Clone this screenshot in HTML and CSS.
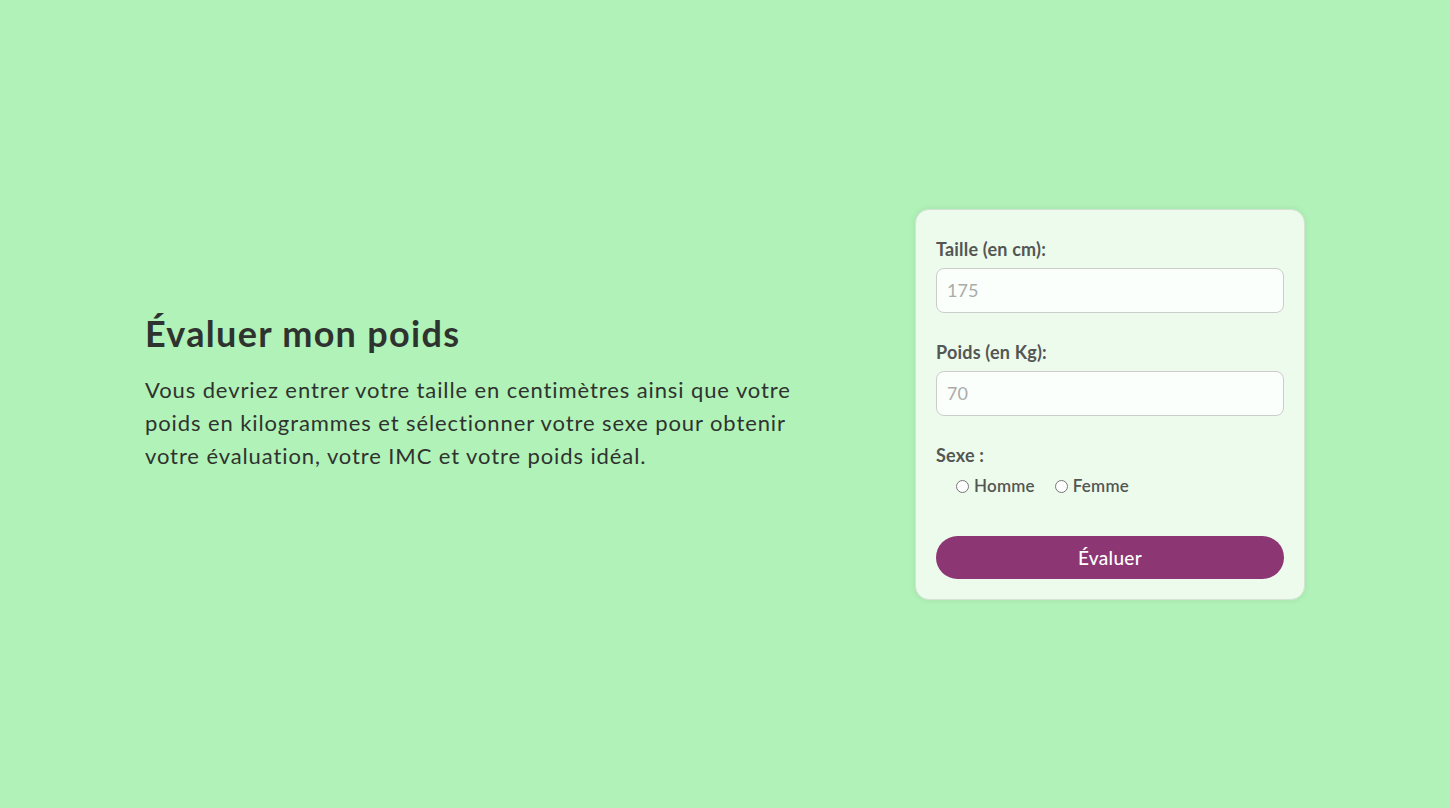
FILE: index.html
```html
<!DOCTYPE html>
<html lang="fr">
<head>
<meta charset="utf-8">
<title>Évaluer mon poids</title>
<link rel="stylesheet" href="styles.css">
</head>
<body>
<main class="page">
  <section class="intro">
    <h1 class="title">Évaluer mon poids</h1>
    <p class="lead">Vous devriez entrer votre taille en centimètres ainsi que votre poids en kilogrammes et sélectionner votre sexe pour obtenir votre évaluation, votre IMC et votre poids idéal.</p>
  </section>
  <form class="card">
    <div class="field">
      <label class="label" for="taille">Taille (en cm):</label>
      <input class="input" id="taille" type="text" placeholder="175">
    </div>
    <div class="field">
      <label class="label" for="poids">Poids (en Kg):</label>
      <input class="input" id="poids" type="text" placeholder="70">
    </div>
    <div class="field field-sex">
      <span class="label">Sexe :</span>
      <div class="radios">
        <label class="radio"><input type="radio" name="sexe"><span>Homme</span></label>
        <label class="radio"><input type="radio" name="sexe"><span>Femme</span></label>
      </div>
    </div>
    <button class="btn" type="button">Évaluer</button>
  </form>
</main>
</body>
</html>
```

FILE: styles.css
```css
* { box-sizing: border-box; }
html, body { margin: 0; height: 100%; }
body {
  background: #b1f2b8;
  font-family: "Lato", "Open Sans", sans-serif;
  color: #333633;
}
.page {
  height: 808px;
  padding: 0 145px;
  display: flex;
  align-items: center;
  justify-content: space-between;
}
.intro {
  width: 665px;
  margin-top: -22px;
}
.title {
  margin: 0 0 22px;
  font-size: 36px;
  font-weight: 700;
  letter-spacing: 1.3px;
  line-height: 36px;
  color: #2f332f;
}
.lead {
  margin: 0;
  font-size: 22px;
  letter-spacing: 0.9px;
  line-height: 33px;
  color: #2f332f;
}
.card {
  width: 390px;
  background: #ecfbec;
  border: 1px solid #d4e4d4;
  border-radius: 14px;
  box-shadow: 0 0 6px rgba(0,0,0,0.08);
  padding: 28px 20px 20px;
  display: flex;
  flex-direction: column;
}
.field { display: flex; flex-direction: column; margin-bottom: 28px; }
.label {
  font-size: 18px;
  font-weight: 700;
  letter-spacing: 0.2px;
  line-height: 22px;
  color: #545654;
  margin-bottom: 8px;
}
.input {
  height: 45px;
  border: 1px solid #cccccc;
  border-radius: 8px;
  background: #fbfffb;
  padding: 0 10px;
  font-family: inherit;
  font-size: 18px;
  color: #333;
}
.input::placeholder { color: #a9aca9; }
.field-sex { margin-bottom: 38px; }
.radios {
  display: flex;
  gap: 20px;
  padding-left: 20px;
  height: 24px;
  align-items: center;
}
.radio {
  display: flex;
  align-items: center;
  font-size: 17px;
  letter-spacing: 0.2px;
  color: #545654;
  font-weight: 600;
}
.radio input {
  margin: 2px 5px 0 0;
  width: 13px;
  height: 13px;
}
.btn {
  height: 43px;
  border: none;
  border-radius: 22px;
  background: #8c3674;
  color: #ffffff;
  font-family: inherit;
  font-size: 19px;
  letter-spacing: 0.3px;
  font-weight: 500;
}
```
